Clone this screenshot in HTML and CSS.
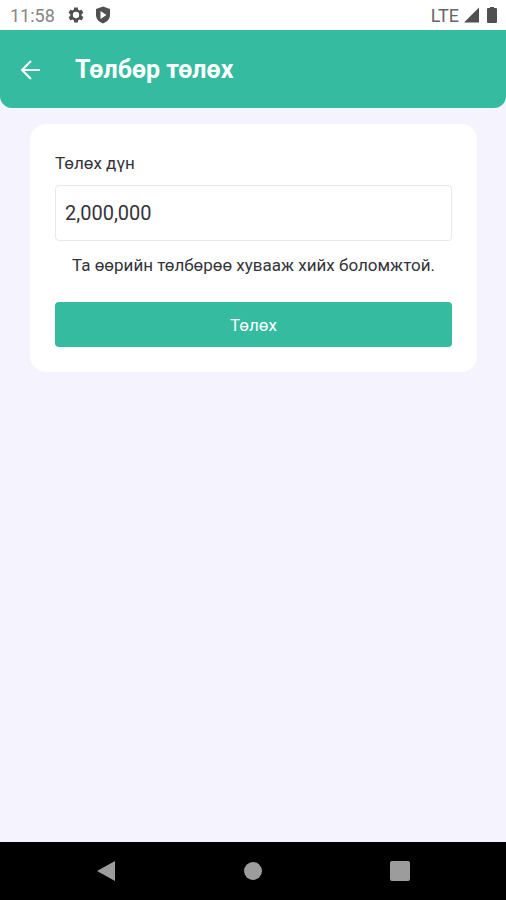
FILE: index.html
```html
<!DOCTYPE html>
<html lang="mn">
<head>
<meta charset="utf-8">
<meta name="viewport" content="width=device-width, initial-scale=1">
<title>Төлбөр төлөх</title>
<link rel="stylesheet" href="styles.css">
</head>
<body>
<div class="status">
  <span class="time">11:58</span>
  <svg class="gear" width="18" height="18" viewBox="0 0 24 24" aria-hidden="true"><path fill-rule="evenodd" d="M19.4 13c.1-.3.1-.7.1-1s0-.7-.1-1l2.1-1.600c.2-.2.2-.4.1-.6l-2-3.500c-.1-.2-.4-.3-.6-.2l-2.500 1c-.5-.4-1.100-.7-1.700-1l-.4-2.600c0-.3-.2-.5-.5-.5h-4c-.3 0-.5.2-.5.4l-.4 2.700c-.6.2-1.100.6-1.700 1l-2.500-1c-.2-.1-.5 0-.6.2l-2 3.500c-.1.200-.1.500.1.600L4.500 11c0 .3-.1.700-.1 1s0 .700.1 1l-2.100 1.600c-.2.2-.2.4-.1.6l2 3.500c.1.2.4.300.6.200l2.500-1c.5.400 1.100.700 1.700 1l.4 2.600c0 .300.2.500.5.500h4c.3 0 .5-.2.5-.4l.4-2.700c.6-.2 1.100-.6 1.700-1l2.500 1c.2.100.5 0 .6-.2l2-3.500c.1-.2.100-.5-.1-.6zM12 16.200a4.200 4.200 0 1 1 0-8.400 4.200 4.200 0 0 1 0 8.400z"/></svg>
  <svg width="16" height="18" viewBox="0 0 16 18" aria-hidden="true"><path fill-rule="evenodd" d="M8 .5 15 3v6c0 4-3 7-7 8.500C4 16 1 13 1 9V3zM5.500 5v8l6-4z"/></svg>
  <span class="network">LTE</span>
  <svg width="16" height="16" viewBox="0 0 16 16" aria-hidden="true"><path d="M0 15.500 15 .5v15z"/></svg>
  <svg class="battery" width="12" height="18" viewBox="0 0 12 18" aria-hidden="true"><path d="M4 1h4v1h2q1 0 1 1v13q0 1-1 1H2q-1 0-1-1V3q0-1 1-1h2z"/></svg>
</div>
<header class="appbar">
  <button class="back" type="button" aria-label="Буцах"><svg width="22" height="22" viewBox="0 0 22 22" aria-hidden="true"><path d="M20 11H2M11 2l-9 9 9 9"/></svg></button>
  <h1>Төлбөр төлөх</h1>
</header>
<main>
  <form class="card">
    <label for="amount">Төлөх дүн</label>
    <input id="amount" type="text" inputmode="numeric" value="2,000,000">
    <p>Та өөрийн төлбөрөө хувааж хийх боломжтой.</p>
    <button class="pay" type="button">Төлөх</button>
  </form>
</main>
<nav class="sysnav">
  <button type="button" aria-label="Back"><svg width="22" height="22" viewBox="0 0 22 22" aria-hidden="true"><path d="M2 11 20 1v20z"/></svg></button>
  <button type="button" aria-label="Home"><svg width="22" height="22" viewBox="0 0 22 22" aria-hidden="true"><circle cx="11" cy="11" r="9"/></svg></button>
  <button type="button" aria-label="Recent"><svg width="22" height="22" viewBox="0 0 22 22" aria-hidden="true"><rect x="1" y="1" width="20" height="20" rx="2"/></svg></button>
</nav>
</body>
</html>
```
FILE: styles.css
```css
* {
  box-sizing: border-box;
}

body {
  margin: 0;
  min-height: 100vh;
  display: flex;
  flex-direction: column;
  background: #f5f4fe;
  color: #33343a;
  font-family: Roboto, "Liberation Sans", sans-serif;
  font-size: 17px;
}

button {
  border: 0;
  padding: 0;
  background: none;
  font: inherit;
}

svg {
  display: block;
}

.status {
  display: flex;
  align-items: center;
  height: 30px;
  padding: 0 8px 0 10px;
  background: #fff;
  fill: #505050;
}

.time {
  margin-right: 12px;
  color: #858585;
  font-size: 18px;
}

.gear {
  margin-right: 10px;
}

.network {
  margin-left: auto;
  margin-right: 5px;
  color: #666;
  font-size: 18px;
}

.battery {
  margin-left: 6px;
}

.appbar {
  display: flex;
  align-items: center;
  gap: 33px;
  height: 78px;
  padding: 2px 20px 0;
  border-radius: 0 0 12px 12px;
  background: #34bba0;
  color: #fff;
}

.back svg {
  fill: none;
  stroke: #fff;
  stroke-width: 2;
}

h1 {
  margin: 0;
  font-size: 25px;
  font-weight: 700;
  line-height: 32px;
}

main {
  flex: 1;
  padding: 16px 29px 16px 30px;
}

.card {
  display: flex;
  flex-direction: column;
  padding: 27px 25px 25px;
  border-radius: 16px;
  background: #fff;
}

label {
  margin-bottom: 10px;
  line-height: 24px;
}

input {
  width: 100%;
  height: 56px;
  padding: 0 9px;
  border: 1px solid #e9e9eb;
  border-radius: 4px;
  background: #fff;
  color: #33343a;
  font: inherit;
  font-size: 20px;
}

p {
  margin: 12px 0 25px;
  line-height: 24px;
  text-align: center;
}

.pay {
  height: 45px;
  border-radius: 4px;
  background: #34bba0;
  color: #fff;
}

.sysnav {
  display: flex;
  height: 58px;
  padding: 0 33px;
  background: #000;
  fill: #9c9c9c;
}

.sysnav button {
  flex: 1;
  display: flex;
  align-items: center;
  justify-content: center;
}
```
